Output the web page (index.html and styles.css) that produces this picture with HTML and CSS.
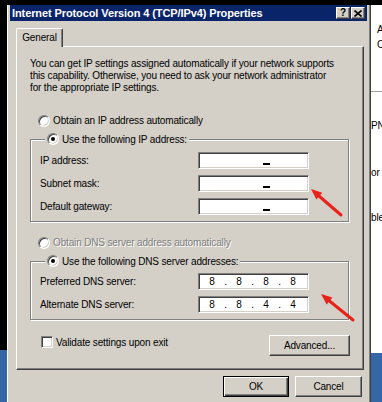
FILE: index.html
```html
<!DOCTYPE html>
<html>
<head>
  <meta charset="UTF-8">
  <title>Internet Protocol Version 4 (TCP/IPv4) Properties</title>
  <link rel="stylesheet" href="styles.css">
</head>
<body>
  <div class="screen">
    <div class="edge-left">
      <div class="edge-blue"></div>
    </div>

    <div class="dialog">
      <div class="titlebar">
        <span class="title">Internet Protocol Version 4 (TCP/IPv4) Properties</span>
        <div class="cap-btns">
          <span class="cap-btn">?</span>
          <span class="cap-btn">
            <svg width="8" height="7" viewBox="0 0 8 7"><path d="M0.5 0.5 L7.5 6.5 M7.5 0.5 L0.5 6.5" stroke="#000" stroke-width="1.6"/></svg>
          </span>
        </div>
      </div>

      <div class="tabs">
        <div class="tab">General</div>
      </div>

      <div class="panel">
        <p class="intro">You can get IP settings assigned automatically if your network supports<br>this capability. Otherwise, you need to ask your network administrator<br>for the appropriate IP settings.</p>

        <div class="option"><span class="radio"></span>Obtain an IP address automatically</div>

        <fieldset class="group">
          <legend><span class="radio checked"></span>Use the following IP address:</legend>
          <div class="field"><label>IP address:</label><div class="ip"><span class="blank"></span></div></div>
          <div class="field"><label>Subnet mask:</label><div class="ip"><span class="blank"></span></div></div>
          <div class="field"><label>Default gateway:</label><div class="ip"><span class="blank"></span></div></div>
        </fieldset>

        <div class="option disabled"><span class="radio"></span>Obtain DNS server address automatically</div>

        <fieldset class="group dns">
          <legend><span class="radio checked"></span>Use the following DNS server addresses:</legend>
          <div class="field"><label>Preferred DNS server:</label>
            <div class="ip"><span class="seg">8</span><span class="dot">.</span><span class="seg">8</span><span class="dot">.</span><span class="seg">8</span><span class="dot">.</span><span class="seg">8</span></div>
          </div>
          <div class="field"><label>Alternate DNS server:</label>
            <div class="ip"><span class="seg">8</span><span class="dot">.</span><span class="seg">8</span><span class="dot">.</span><span class="seg">4</span><span class="dot">.</span><span class="seg">4</span></div>
          </div>
        </fieldset>

        <div class="panel-foot">
          <div class="check-row"><span class="checkbox"></span>Validate settings upon exit</div>
          <button class="btn advanced">Advanced...</button>
        </div>
      </div>

      <div class="buttons">
        <button class="btn default">OK</button>
        <button class="btn cancel">Cancel</button>
      </div>
    </div>

    <div class="side">
      <span class="side-a">A</span>
      <span class="side-c">C</span>
      <div class="side-rule"></div>
      <span class="side-pn">PN</span>
      <span class="side-or">or</span>
      <span class="side-ble">ble:</span>
      <div class="side-blue"></div>
    </div>

    <svg class="arrows" width="382" height="402" viewBox="0 0 382 402">
      <line x1="341" y1="215" x2="319" y2="196" stroke="#e8221a" stroke-width="3" stroke-linecap="round"/>
      <polygon points="311,189 322.3,192.8 316.4,199.6" fill="#e8221a"/>
      <line x1="353" y1="320" x2="329.5" y2="301" stroke="#e8221a" stroke-width="3" stroke-linecap="round"/>
      <polygon points="321,294 332.4,297.4 326.7,304.4" fill="#e8221a"/>
    </svg>
  </div>
</body>
</html>
```

FILE: styles.css
```css
* {
  box-sizing: border-box;
}

body {
  margin: 0;
  background: #000;
  font-family: "Liberation Sans", Arial, sans-serif;
  font-size: 10px;
  letter-spacing: -0.15px;
  color: #000;
}

.screen {
  position: relative;
  display: flex;
  width: 382px;
  height: 402px;
  padding-top: 5px;
  overflow: hidden;
}

.edge-left {
  width: 7px;
  display: flex;
  flex-direction: column;
  justify-content: flex-end;
}

.edge-blue {
  height: 52px;
  background: #3566a6;
}

/* dialog window */
.dialog {
  width: 364px;
  background: #d4d0c8;
  border-left: 1px solid #fff;
  border-right: 1px solid #404040;
  box-shadow: inset -1px 0 #808080;
  padding: 0 3px 0 2px;
}

.titlebar {
  height: 16px;
  background: #0a246a;
  color: #fff;
  display: flex;
  align-items: center;
  justify-content: space-between;
  padding: 0 2px;
}

.title {
  font-weight: bold;
  font-size: 11px;
  letter-spacing: -0.1px;
}

.cap-btns {
  display: flex;
  gap: 1px;
}

.cap-btn {
  width: 14px;
  height: 12px;
  background: #d4d0c8;
  border: 1px solid;
  border-color: #fff #404040 #404040 #fff;
  box-shadow: inset -1px -1px #808080;
  color: #000;
  font-weight: bold;
  font-size: 10px;
  line-height: 10px;
  display: flex;
  align-items: center;
  justify-content: center;
}

.tabs {
  display: flex;
  padding: 7px 0 0 6px;
}

.tab {
  position: relative;
  z-index: 1;
  width: 47px;
  height: 19px;
  margin-bottom: -1px;
  background: #d4d0c8;
  border: 1px solid;
  border-bottom: none;
  border-color: #fff #404040 #d4d0c8 #fff;
  border-radius: 2px 2px 0 0;
  box-shadow: inset -1px 0 #808080;
  text-align: center;
  line-height: 17px;
}

.panel {
  height: 324px;
  margin: 0 3px 0 6px;
  border: 1px solid;
  border-color: #fff #404040 #404040 #fff;
  box-shadow: inset -1px -1px #808080;
  padding: 11px 14px 0 13px;
}

.intro {
  margin: 0;
  line-height: 12px;
}

.option {
  display: flex;
  align-items: center;
  gap: 3px;
  height: 13px;
  margin-top: 20px;
  padding-left: 8px;
}

.option.disabled {
  margin-top: 14px;
  color: #808080;
  text-shadow: 1px 1px 0 #fff;
}

.radio {
  display: inline-block;
  position: relative;
  width: 12px;
  height: 12px;
  border-radius: 50%;
  background: #fff;
  border: 1px solid;
  border-color: #808080 #fff #fff #808080;
  box-shadow: inset 1px 1px #404040, inset -1px -1px #d4d0c8;
  vertical-align: middle;
  flex-shrink: 0;
}

.radio.checked::after {
  content: "";
  position: absolute;
  left: 3px;
  top: 3px;
  width: 4px;
  height: 4px;
  border-radius: 50%;
  background: #000;
}

.group {
  margin: 6px 0 0 0;
  min-width: 0;
  border: 1px solid #808080;
  box-shadow: 1px 1px 0 #fff, inset 1px 1px 0 #fff;
  padding: 6px 0 6px 9px;
}

.group.dns {
  padding-top: 5px;
}

.group legend {
  margin-left: 5px;
  padding: 0 2px;
  line-height: 13px;
  background: #d4d0c8;
}

.group legend .radio {
  margin: -2px 3px 0 0;
}

.field {
  display: flex;
  align-items: center;
  height: 17px;
}

.field + .field {
  margin-top: 6px;
}

.field label {
  width: 158px;
}

.ip {
  width: 111px;
  height: 17px;
  background: #fff;
  border: 1px solid;
  border-color: #808080 #fff #fff #808080;
  box-shadow: inset 1px 1px #404040, inset -1px -1px #d4d0c8;
  display: flex;
  align-items: center;
  padding-left: 2px;
}

.blank {
  width: 7px;
  height: 2px;
  margin: 7px 0 0 62px;
  background: #000;
}

.seg {
  width: 22px;
  text-align: center;
}

.dot {
  width: 5px;
  text-align: center;
}

.panel-foot {
  display: flex;
  justify-content: space-between;
  align-items: flex-start;
  margin: 15px -1px 0 0;
  padding-left: 11px;
}

.check-row {
  display: flex;
  align-items: center;
  gap: 3px;
  margin-top: 1px;
}

.checkbox {
  width: 12px;
  height: 12px;
  background: #fff;
  border: 1px solid;
  border-color: #808080 #fff #fff #808080;
  box-shadow: inset 1px 1px #404040, inset -1px -1px #d4d0c8;
}

.btn {
  height: 21px;
  padding: 0;
  background: #d4d0c8;
  border: 1px solid;
  border-color: #fff #404040 #404040 #fff;
  box-shadow: inset -1px -1px #808080;
  font: inherit;
  letter-spacing: inherit;
  color: #000;
}

.btn.advanced {
  width: 81px;
}

.buttons {
  display: flex;
  justify-content: flex-end;
  gap: 6px;
  margin: 6px 5px 0 0;
}

.btn.default {
  width: 66px;
  border-color: #000;
  box-shadow: inset 1px 1px #fff, inset -1px -1px #404040, inset -2px -2px #808080;
}

.btn.cancel {
  width: 67px;
}

/* window behind the dialog */
.side {
  flex: 1;
  display: flex;
  flex-direction: column;
  background: #fff;
  overflow: hidden;
  line-height: 12px;
  white-space: nowrap;
}

.side-a {
  margin: 19px 0 0 6px;
}

.side-c {
  margin: 3px 0 0 6px;
}

.side-rule {
  height: 1px;
  margin-top: 40px;
  background: #a0a0a0;
}

.side-pn {
  margin-top: 28px;
}

.side-or {
  margin-top: 35px;
}

.side-ble {
  margin-top: 33px;
}

.side-blue {
  margin-top: auto;
  height: 49px;
  background: #3566a6;
}

.arrows {
  position: absolute;
  left: 0;
  top: 0;
  pointer-events: none;
}
```
